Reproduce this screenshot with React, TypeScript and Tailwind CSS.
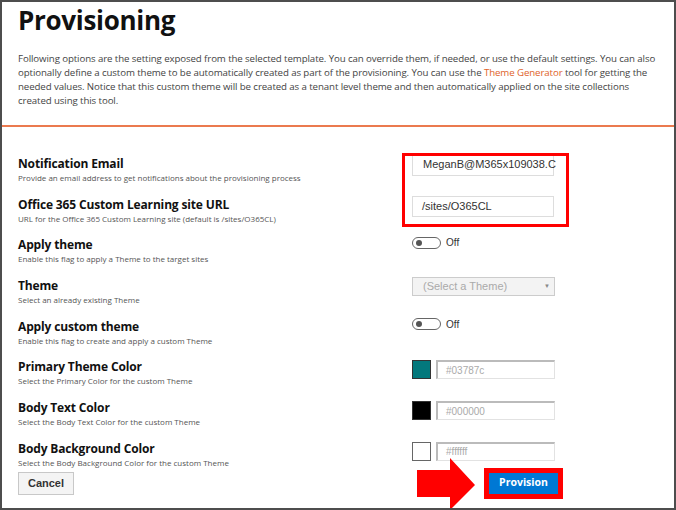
import React from "react";

const sans = { fontFamily: '"Open Sans", "Noto Sans", sans-serif' };

function Toggle() {
  return (
    <div className="flex items-center gap-[5px]">
      <div className="w-[29px] h-[12px] rounded-full border-[1.5px] border-[#666] flex items-center pl-[3px]">
        <div className="w-[6px] h-[6px] rounded-full bg-[#555]" />
      </div>
      <span className="font-['Liberation_Sans',Arial,sans-serif] text-[10px] text-[#333]">Off</span>
    </div>
  );
}

function ColorField({ color, value, border }: { color: string; value: string; border?: string }) {
  return (
    <div className="flex items-center gap-[5px]">
      <div className={`w-[19px] h-[19px] border ${border ?? "border-[#333]"}`} style={{ background: color }} />
      <div className="w-[119px] h-[19px] border-t-2 border-l-2 border-r border-b border-t-[#bbb] border-l-[#bbb] border-r-[#e2e2e2] border-b-[#e2e2e2] flex items-center pl-[8px] font-['Liberation_Sans',Arial,sans-serif] text-[10px] text-[#aaa]">
        {value}
      </div>
    </div>
  );
}

const rows: { label: string; sub: string; control: React.ReactNode; mt: string }[] = [
  {
    label: "Notification Email",
    sub: "Provide an email address to get notifications about the provisioning process",
    mt: "mt-[-3px]",
    control: (
      <div className="w-[142px] h-[23px] border border-[#ddd] flex items-center pl-[10px] font-['Liberation_Sans',Arial,sans-serif] text-[11px] text-[#333]">
        MeganB@M365x109038.C
      </div>
    ),
  },
  {
    label: "Office 365 Custom Learning site URL",
    sub: "URL for the Office 365 Custom Learning site (default is /sites/O365CL)",
    mt: "mt-[-1px]",
    control: (
      <div className="w-[142px] h-[21px] border border-[#ddd] flex items-center pl-[9px] font-['Liberation_Sans',Arial,sans-serif] text-[11px] text-[#333]">
        /sites/O365CL
      </div>
    ),
  },
  {
    label: "Apply theme",
    sub: "Enable this flag to apply a Theme to the target sites",
    mt: "mt-[-2px]",
    control: <Toggle />,
  },
  {
    label: "Theme",
    sub: "Select an already existing Theme",
    mt: "mt-[-1px]",
    control: (
      <div className="w-[143px] h-[19px] border border-[#ccc] bg-[#f3f3f3] flex items-center justify-between pl-[10px] pr-[4px] font-['Liberation_Sans',Arial,sans-serif] text-[11px] text-[#aaa]">
        <span>(Select a Theme)</span>
        <span className="text-[6px] text-[#888]">▼</span>
      </div>
    ),
  },
  {
    label: "Apply custom theme",
    sub: "Enable this flag to create and apply a custom Theme",
    mt: "mt-[-2px]",
    control: <Toggle />,
  },
  {
    label: "Primary Theme Color",
    sub: "Select the Primary Color for the custom Theme",
    mt: "mt-[1px]",
    control: <ColorField color="#03787c" value="#03787c" />,
  },
  {
    label: "Body Text Color",
    sub: "Select the Body Text Color for the custom Theme",
    mt: "mt-[1px]",
    control: <ColorField color="#000000" value="#000000" />,
  },
  {
    label: "Body Background Color",
    sub: "Select the Body Background Color for the custom Theme",
    mt: "mt-[1px]",
    control: <ColorField color="#ffffff" value="#ffffff" border="border-[#666]" />,
  },
];

export default function App() {
  return (
    <div className="relative w-[676px] h-[510px] overflow-hidden bg-white border-2 border-[#4d4d4d]" style={sans}>
      <div className="pl-[16px] pr-[12px]">
        <h1 className="pt-[1px] text-[26px] leading-[35px] font-bold text-[#111] tracking-[-0.3px]">Provisioning</h1>
        <div className="mt-[14px] text-[9.7px] leading-[14px] text-[#444] whitespace-nowrap tracking-[-0.1px]">
          <div>
            Following options are the setting exposed from the selected template. You can override them, if needed, or use the default settings. You can also
          </div>
          <div>
            optionally define a custom theme to be automatically created as part of the provisioning. You can use the{" "}
            <span className="text-[#e0622a]">Theme Generator</span> tool for getting the
          </div>
          <div>
            needed values. Notice that this custom theme will be created as a tenant level theme and then automatically applied on the site collections
          </div>
          <div>created using this tool.</div>
        </div>
      </div>
      <div className="mt-[17px] h-[2px] bg-[#eb7a4f]" />

      <div className="pl-[16px] pt-[29px]">
        {rows.map((r) => (
          <div key={r.label} className="grid grid-cols-[394px_1fr] h-[40.7px]">
            <div>
              <div className="text-[12px] leading-[16px] font-bold text-[#111] tracking-[-0.15px]">{r.label}</div>
              <div className="text-[8px] leading-[11px] text-[#555]">{r.sub}</div>
            </div>
            <div className={r.mt}>{r.control}</div>
          </div>
        ))}
        <div className="flex items-start mt-[-10px]">
          <button className="w-[56px] h-[23px] border border-[#c8c8c8] bg-[#f4f4f4] font-['Liberation_Sans',Arial,sans-serif] text-[11px] font-bold text-[#333]">
            Cancel
          </button>
          <div className="ml-[410px] mt-[-4px] border-[5px] border-[#ff0000]">
            <button className="block w-[69px] h-[21px] bg-[#0078d4] text-white text-[10.5px] font-bold">Provision</button>
          </div>
        </div>
      </div>

      {/* red highlight around the first two fields */}
      <div className="absolute left-[400px] top-[151px] w-[167px] h-[74px] border-[3px] border-[#ff0000]" />

      {/* arrow pointing at Provision */}
      <svg className="absolute left-[415px] top-[456px]" width="60" height="54" viewBox="0 0 60 54">
        <polygon points="0,12 33,12 33,0 58,27 33,52 33,39 0,39" fill="#ff0000" />
      </svg>
    </div>
  );
}
